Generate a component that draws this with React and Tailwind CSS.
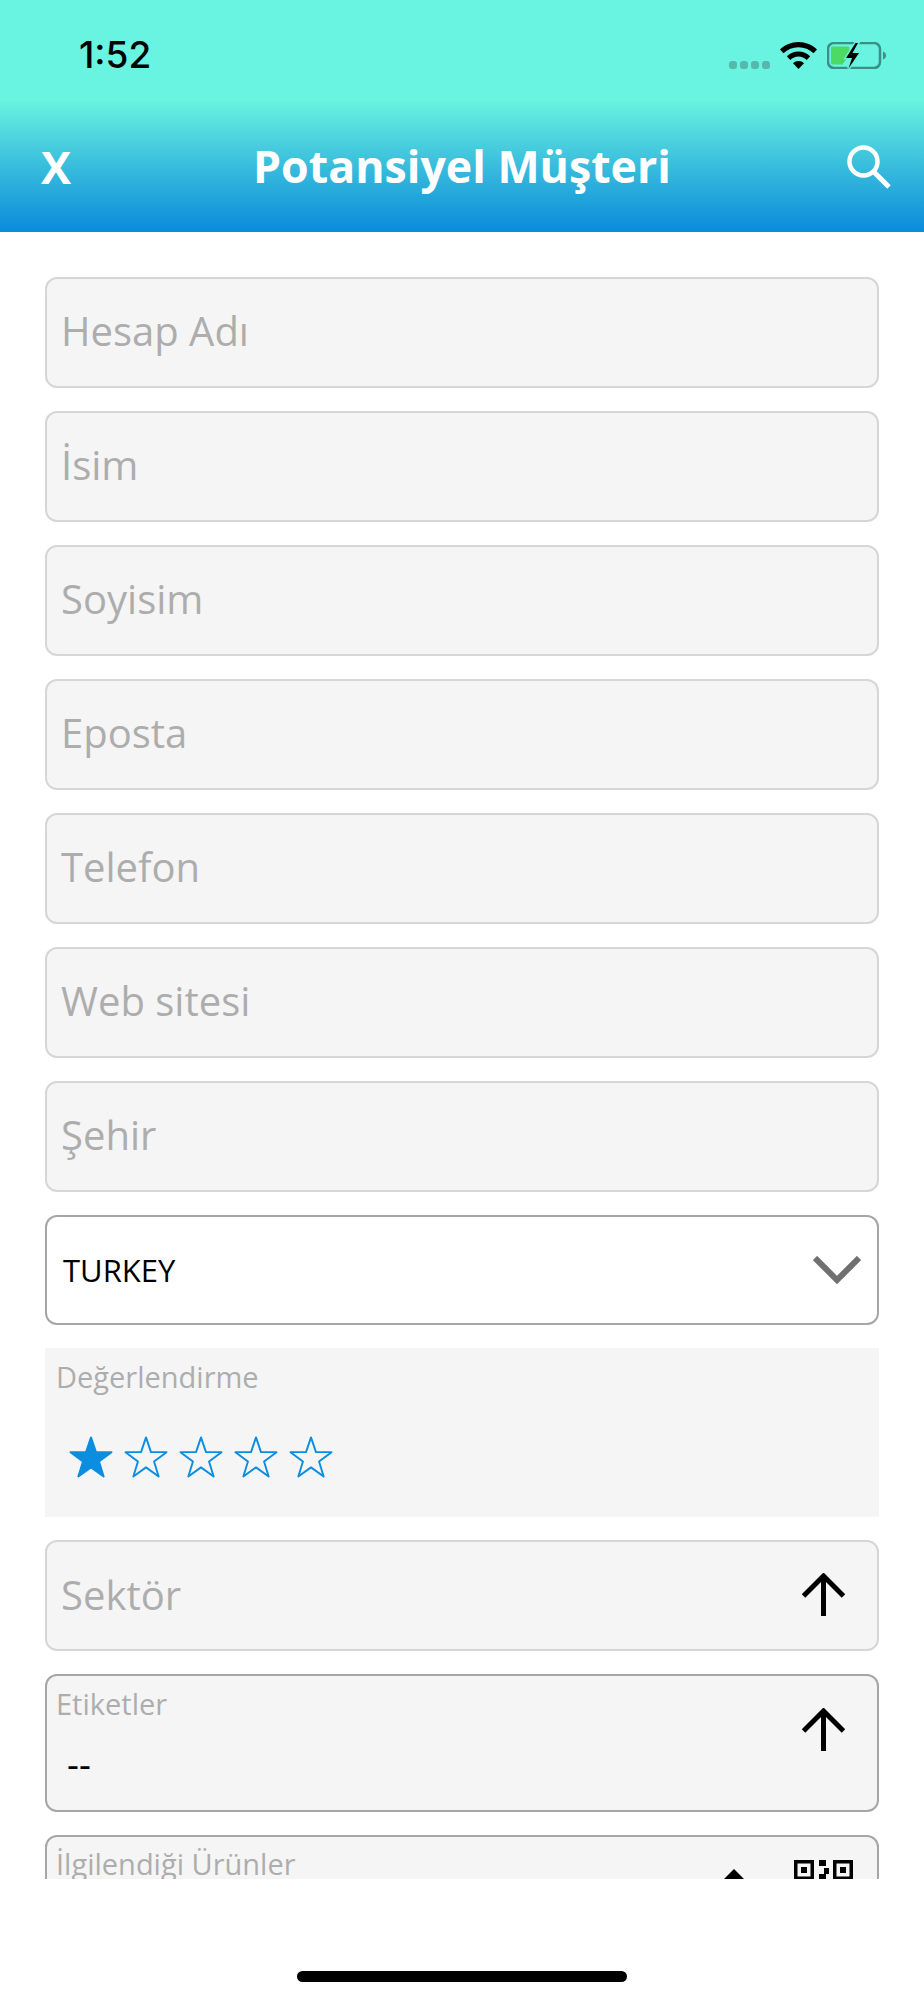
import { useState } from "react";

const FONT = "font-['Open_Sans','Liberation_Sans',sans-serif]";

const textFields = ["Hesap Adı", "İsim", "Soyisim", "Eposta", "Telefon", "Web sitesi", "Şehir"];

function ArrowUp() {
  return (
    <svg viewBox="0 0 43 43" className="w-[43px] h-[43px]" fill="none" stroke="#000" strokeWidth="5">
      <path d="M21.500 43V3" />
      <path d="M1.500 23L21.500 3l20 20" />
    </svg>
  );
}

function Star({ filled }) {
  return (
    <svg viewBox="-1 -1 48 48" className="w-[46px] h-[46px]">
      <path
        d="M23 1.500L28.200 16.900 44.400 16.900 31.400 26.700 36.200 42.300 23 32.800 9.800 42.300 14.600 26.700 1.600 16.900 17.800 16.900z"
        fill={filled ? "#0b8de0" : "none"}
        stroke="#0b8de0"
        strokeWidth="2"
        strokeLinejoin="round"
      />
    </svg>
  );
}

function QrIcon() {
  return (
    <svg viewBox="0 0 59 59" className="w-[59px] h-[59px]" fill="#000">
      <path d="M0 0h20v20H0zM3.500 3.500v13h13v-13zM7 7h6v6H7z" fillRule="evenodd" />
      <path d="M39 0h20v20H39zM42.500 3.500v13h13v-13zM46 7h6v6h-6z" fillRule="evenodd" />
      <path d="M25 0h7v6h-7zM30 8h5v6h-5zM25 14h7v6h-7z" />
    </svg>
  );
}

export default function App() {
  const [rating] = useState(1);

  return (
    <div className={`w-[924px] h-[2000px] bg-white flex flex-col ${FONT}`}>
      <div className="h-[232px] bg-[linear-gradient(180deg,#68f4e0_0%,#68f4e0_43%,#38bcdc_72%,#0a8bdc_100%)] flex flex-col">
        <div className="h-[110px] pl-[79px] pr-[38px] pt-[34px] flex justify-between items-start">
          <span className="font-['Inter',sans-serif] font-medium text-[37px] leading-[42px] text-black">1:52</span>
          <div className="flex items-start pt-[8px]">
            <div className="flex gap-[3px] mt-[19px] mr-[10px]">
              <span className="w-[8px] h-[8px] rounded-[3px] bg-[#57b7aa]"></span>
              <span className="w-[8px] h-[8px] rounded-[3px] bg-[#57b7aa]"></span>
              <span className="w-[8px] h-[8px] rounded-[3px] bg-[#57b7aa]"></span>
              <span className="w-[8px] h-[8px] rounded-[3px] bg-[#57b7aa]"></span>
            </div>
            <svg viewBox="0 0 37 27" className="w-[37px] h-[27px] mr-[10px]">
              <path d="M18.500 0C11.300 0 5 2.800 0 7.500l3.500 3.700C7.500 7.500 12.700 5.200 18.500 5.200s11 2.300 15 6l3.500-3.700C32 2.800 25.700 0 18.500 0z" />
              <path d="M18.500 9.500c-4.600 0-8.500 1.700-11.700 4.700l3.500 3.700c2.200-2 5-3.300 8.200-3.300s6 1.300 8.200 3.300l3.500-3.700C27 11.200 23.100 9.500 18.500 9.500z" />
              <path d="M18.500 19c-2.300 0-4 .8-5.500 2.200l5.500 5.800 5.500-5.800C22.500 19.800 20.800 19 18.500 19z" />
            </svg>
            <svg viewBox="0 0 59 27" className="w-[59px] h-[27px]">
              <rect x="1" y="1" width="52" height="25" rx="6" fill="none" stroke="#3d8f86" strokeWidth="2.500" />
              <path d="M5 4.500h16a1.500 1.500 0 0 1 1.500 1.500v8L16 21.500v1H5.500A1.500 1.500 0 0 1 4 21V6a1.500 1.500 0 0 1 1-1.500z" fill="#4cd964" />
              <path d="M28.500 1l-9.500 15h6l-3.500 10.500 10.500-15.500h-6.500L31 1z" fill="#68f0dc" stroke="#68f0dc" strokeWidth="3" />
              <path d="M28.500 1l-9.500 15h6l-3.500 10.500 10.500-15.500h-6.500L31 1z" fill="#000" />
              <path d="M56 9.500c2 .7 3 2.200 3 4s-1 3.300-3 4z" fill="#3d8f86" />
            </svg>
          </div>
        </div>
        <div className="flex-1 grid grid-cols-[1fr_auto_1fr] items-center px-[33px] pb-[9px]">
          <span className="font-bold text-[45px] leading-none text-white ml-[8px]">X</span>
          <span className="font-bold text-[44.700px] leading-none text-white">Potansiyel Müşteri</span>
          <div className="flex justify-end">
            <svg viewBox="0 0 44 44" className="w-[44px] h-[44px]" fill="none" stroke="#fff" strokeWidth="4.500">
              <circle cx="16.500" cy="16.500" r="14" />
              <path d="M26.500 26.500L42 42" strokeWidth="5" />
            </svg>
          </div>
        </div>
      </div>

      <div className="h-[1647px] overflow-hidden px-[45px] pt-[45px] flex flex-col gap-[23px]">
        {textFields.map((label) => (
          <div
            key={label}
            className="shrink-0 h-[111px] rounded-[12px] border-2 border-[#d6d6d6] bg-[#f5f5f5] flex items-center pl-[14px] pb-[3px] text-[40px] text-[#adadad]"
          >
            {label}
          </div>
        ))}

        <div className="shrink-0 h-[110px] rounded-[12px] border-2 border-[#a6a6a6] bg-white flex items-center justify-between pl-[16px] pr-[16px]">
          <span className="text-[31px] text-black">TURKEY</span>
          <svg viewBox="0 0 48 28" className="w-[48px] h-[28px]" fill="none" stroke="#707070" strokeWidth="6">
            <path d="M2 2l22 22L46 2" />
          </svg>
        </div>

        <div className="shrink-0 h-[169px] bg-[#f5f5f5] pl-[11px] pt-[10px]">
          <div className="text-[29px] leading-[38px] text-[#adadad]">Değerlendirme</div>
          <div className="flex gap-[9px] mt-[39px] ml-[12px]">
            {[1, 2, 3, 4, 5].map((n) => (
              <Star key={n} filled={n <= rating} />
            ))}
          </div>
        </div>

        <div className="shrink-0 h-[111px] rounded-[12px] border-2 border-[#d6d6d6] bg-[#f5f5f5] flex items-center justify-between pl-[14px] pr-[32px] pb-[2px] text-[40px] text-[#adadad]">
          <span>Sektör</span>
          <ArrowUp />
        </div>

        <div className="shrink-0 h-[138px] rounded-[12px] border-2 border-[#a6a6a6] bg-[#f5f5f5] flex justify-between pl-[9px] pr-[32px]">
          <div>
            <div className="text-[29px] leading-[38px] text-[#adadad] mt-[9px]">Etiketler</div>
            <div className="text-[37px] leading-[40px] text-black mt-[21px] ml-[11px]">--</div>
          </div>
          <div className="mt-[32px]">
            <ArrowUp />
          </div>
        </div>

        <div className="shrink-0 h-[138px] rounded-[12px] border-2 border-[#a6a6a6] bg-[#f5f5f5] flex justify-between pl-[9px] pr-[24px]">
          <div className="text-[29px] leading-[38px] text-[#adadad] mt-[8px]">İlgilendiği Ürünler</div>
          <div className="flex items-start">
            <div className="w-0 h-0 mt-[32px] mr-[50px] border-x-[10px] border-x-transparent border-b-[10px] border-b-black"></div>
            <div className="mt-[23px]">
              <QrIcon />
            </div>
          </div>
        </div>
      </div>

      <div className="flex-1 flex justify-center pt-[92px]">
        <div className="w-[330px] h-[11px] rounded-full bg-black"></div>
      </div>
    </div>
  );
}
